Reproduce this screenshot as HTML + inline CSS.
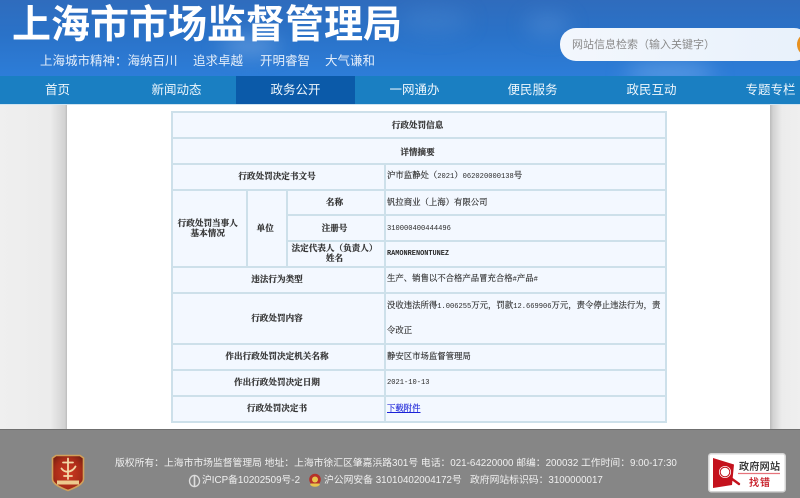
<!DOCTYPE html>
<html lang="zh-CN"><head><meta charset="utf-8"><title>上海市市场监督管理局</title>
<style>
*{box-sizing:border-box;text-spacing-trim:space-all;font-kerning:none}
html,body{margin:0;padding:0;width:800px;height:498px;overflow:hidden;background:#fff;font-family:"Liberation Sans","Noto Sans CJK SC",sans-serif}
.abs{position:absolute}
#hd{left:0;top:0;width:800px;height:76px;background:linear-gradient(180deg,#2f6cbd 0,#2a72c8 45%,#2d7dd8 100%);overflow:hidden}
#hd i{position:absolute;border-radius:50%;filter:blur(10px)}
#title{left:12px;top:1px;font-size:39px;line-height:50px;font-weight:700;color:#fff;white-space:nowrap}
.sl{top:53px;font-size:12.5px;line-height:16px;color:#e4eefa;white-space:nowrap}
#search{left:560px;top:28px;width:250px;height:33px;border-radius:16px;background:linear-gradient(90deg,#f3f7fd,#e8f1fb)}
#search span{position:absolute;left:12px;top:10px;font-size:11px;line-height:15px;color:#8a8a8a;white-space:nowrap}
#orange{left:797px;top:33px;width:22px;height:23px;border-radius:50%;background:#e8911f}
#nav{left:0;top:76px;width:800px;height:28px;background:#1a7fc2}
#nav span{position:absolute;top:0;width:119px;height:28px;line-height:28px;text-align:center;font-size:12.5px;color:#eef6fc;white-space:nowrap}
#nav .on{background:#0b5aa9}
#line{left:0;top:104px;width:800px;height:1px;background:#cfe3f0}
#sideL{left:0;top:105px;width:67px;height:324px;background:linear-gradient(90deg,#efefef 0,#ececec 75%,#d2d2d2 97%,#bbb 100%)}
#sideR{left:770px;top:105px;width:30px;height:324px;background:linear-gradient(90deg,#bbb 0,#d2d2d2 10%,#ececec 40%,#efefef 100%)}
table{position:absolute;left:171px;top:111px;width:494px;height:310px;border-collapse:collapse;table-layout:fixed;background:#f3f8ff;font-family:"Liberation Serif","Noto Serif CJK SC",serif}
td{border:2px solid #cde0ea;padding:0;font-size:8.6px;line-height:9.7px;color:#2a2a2a;text-align:center;vertical-align:middle;overflow:hidden;white-space:nowrap}
td.b{font-weight:700;color:#333;-webkit-text-stroke:.2px #333;padding-right:3px}
td.l{text-align:left;padding-left:1px;font-size:8.4px;-webkit-text-stroke:.15px #2a2a2a}
td a{color:#1a22d8;text-decoration:underline;-webkit-text-stroke:.15px #1a22d8}
.m{font-family:"Liberation Mono",monospace;font-size:7.1px;-webkit-text-stroke:0}
#foot{left:0;top:429px;width:800px;height:69px;background:#868686;border-top:1px solid #6f6f6f}
.ft{font-size:9.8px;line-height:14px;color:#f0f0f0;white-space:nowrap}
</style></head><body>
<div id="hd" class="abs">
<i style="left:525px;top:14px;width:45px;height:22px;background:rgba(120,170,230,.28)"></i>
<i style="left:220px;top:38px;width:60px;height:16px;background:rgba(170,205,245,.45)"></i>
<i style="left:625px;top:62px;width:90px;height:22px;background:rgba(150,195,245,.4)"></i>
<i style="left:400px;top:8px;width:70px;height:26px;background:rgba(90,150,220,.25)"></i>
</div>
<div id="title" class="abs">上海市市场监督管理局</div>
<div class="abs sl" style="left:40px">上海城市精神：海纳百川</div>
<div class="abs sl" style="left:193px">追求卓越</div>
<div class="abs sl" style="left:260px">开明睿智</div>
<div class="abs sl" style="left:325px">大气谦和</div>
<div id="search" class="abs"><span>网站信息检索（输入关键字）</span></div>
<div id="orange" class="abs"></div>
<div id="nav" class="abs">
<span style="left:-2px">首页</span><span style="left:117px">新闻动态</span><span class="on" style="left:236px">政务公开</span><span style="left:355px">一网通办</span><span style="left:473px">便民服务</span><span style="left:592px">政民互动</span><span style="left:711px">专题专栏</span>
</div>
<div id="line" class="abs"></div>
<div id="sideL" class="abs"></div><div id="sideR" class="abs"></div>

<table>
<colgroup><col style="width:74.5px"><col style="width:40.5px"><col style="width:98px"><col style="width:281px"></colgroup>
<tr style="height:26px"><td class="b" colspan="4" style="padding-top:2px">行政处罚信息</td></tr>
<tr style="height:26px"><td class="b" colspan="4" style="padding-top:3px">详情摘要</td></tr>
<tr style="height:26px"><td class="b" colspan="3">行政处罚决定书文号</td><td class="l">沪市监静处（<span class="m">2021</span>）<span class="m">062020000138</span>号</td></tr>
<tr style="height:25px"><td class="b" rowspan="3">行政处罚当事人<br>基本情况</td><td class="b" rowspan="3">单位</td><td class="b">名称</td><td class="l">钒拉商业（上海）有限公司</td></tr>
<tr style="height:26px"><td class="b" style="padding-top:1px">注册号</td><td class="l" style="padding-top:1px"><span class="m">310000400444496</span></td></tr>
<tr style="height:26px"><td class="b">法定代表人（负责人）<br>姓名</td><td class="l"><span class="m" style="font-size:6.9px;font-weight:700">RAMONRENONTUNEZ</span></td></tr>
<tr style="height:26px"><td class="b" colspan="3">违法行为类型</td><td class="l">生产、销售以不合格产品冒充合格<span class="m">#</span>产品<span class="m">#</span></td></tr>
<tr style="height:50px"><td class="b" colspan="3">行政处罚内容</td><td class="l" style="line-height:24px">没收违法所得<span class="m">1.006255</span>万元，罚款<span class="m">12.669906</span>万元，责令停止违法行为，责<br>令改正</td></tr>
<tr style="height:26px"><td class="b" colspan="3">作出行政处罚决定机关名称</td><td class="l">静安区市场监督管理局</td></tr>
<tr style="height:26px"><td class="b" colspan="3">作出行政处罚决定日期</td><td class="l"><span class="m">2021-10-13</span></td></tr>
<tr style="height:26px"><td class="b" colspan="3">行政处罚决定书</td><td class="l"><a href="#">下载附件</a></td></tr>
</table>

<div id="foot" class="abs"></div>
<svg class="abs" style="left:50px;top:452px" width="36" height="40" viewBox="0 0 36 40">
<defs><radialGradient id="g" cx=".5" cy=".5" r=".6"><stop offset="0" stop-color="#d03a22"/><stop offset=".7" stop-color="#a92c18"/><stop offset="1" stop-color="#7d2212"/></radialGradient></defs>
<path d="M6 3.500H30L33.500 6V27C33.500 32 26 35.500 18 38.500C10 35.500 2.500 32 2.500 27V6Z" fill="url(#g)" stroke="#d2a05a" stroke-width="1.600"/>
<path d="M18 6.500V27M13 10.500H23M11.500 16.500C15 21.500 22 20.500 25.500 14.500M14 24H22" fill="none" stroke="#f2d9a6" stroke-width="1.800" stroke-linecap="round"/>
<rect x="7" y="28.500" width="22" height="4" fill="#edc98d"/>
</svg>
<div class="abs ft" style="left:115px;top:457px">版权所有：上海市市场监督管理局 地址：上海市徐汇区肇嘉浜路301号 电话：021-64220000 邮编：200032 工作时间：9:00-17:30</div>
<svg class="abs" style="left:188px;top:474px" width="13" height="14" viewBox="0 0 13 14"><ellipse cx="6.500" cy="7" rx="5" ry="5.600" fill="none" stroke="#ddd" stroke-width="1.300"/><path d="M6.500 1V13" stroke="#ddd" stroke-width="1.600"/></svg>
<div class="abs ft" style="left:202px;top:474px">沪ICP备10202509号-2</div>
<svg class="abs" style="left:308px;top:473px" width="14" height="15" viewBox="0 0 14 15"><circle cx="7" cy="6.500" r="5.800" fill="#b5322a"/><circle cx="7" cy="6.500" r="3" fill="#e8c64c"/><path d="M2 11.500C4 14.500 10 14.500 12 11.500L11 10.500H3Z" fill="#e8c64c"/></svg>
<div class="abs ft" style="left:324px;top:474px">沪公网安备 31010402004172号</div>
<div class="abs ft" style="left:470px;top:474px">政府网站标识码：3100000017</div>

<svg class="abs" style="left:708px;top:453px" width="78" height="40" viewBox="0 0 78 40">
<rect x=".75" y=".75" width="76.500" height="38" rx="2.500" fill="#fff" stroke="#d4d4d4" stroke-width="1.500"/>
<path d="M5 5L26 11.500L24 32L5 35Z" fill="#c4121d"/>
<circle cx="17" cy="19" r="6.800" fill="#fff" stroke="#c4121d" stroke-width="1.500"/>
<circle cx="17" cy="19" r="4.800" fill="none" stroke="#c4121d" stroke-width="1"/>
<path d="M22 24.500L31 31" stroke="#c4121d" stroke-width="2.400" stroke-linecap="round"/>
<path d="M30 20.500H72" stroke="#e7737b" stroke-width="1.200"/>
<text x="31" y="17" font-size="10" fill="#222" stroke="#222" stroke-width=".2" textLength="41" font-family="Liberation Sans,Noto Sans CJK SC,sans-serif">政府网站</text>
<text x="41" y="33" font-size="10" fill="#c4121d" stroke="#c4121d" stroke-width=".2" textLength="21" font-family="Liberation Sans,Noto Sans CJK SC,sans-serif">找错</text>
</svg>
</body></html>
